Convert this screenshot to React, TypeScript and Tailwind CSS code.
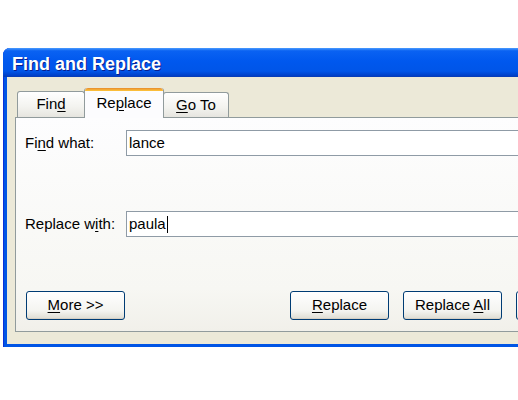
import React from 'react';

const font = "font-['Liberation_Sans',Arial,sans-serif]";

const Tab: React.FC<{ active?: boolean; children: React.ReactNode; className?: string }> = ({
  active,
  children,
  className = '',
}) => {
  if (active) {
    return (
      <div
        className={`relative z-10 -mb-px flex h-[30px] shrink-0 flex-col rounded-t-[3px] border-x border-[#919b9c] bg-[#fcfcfe] ${className}`}
      >
        <div className="h-[3px] rounded-t-[3px] bg-[linear-gradient(to_bottom,#e68b2c,#ffc73c)]" />
        <div className="flex flex-1 items-center justify-center pb-[2px] text-[15px] text-black">{children}</div>
      </div>
    );
  }
  return (
    <div
      className={`flex shrink-0 items-center justify-center rounded-t-[3px] border border-b-0 border-[#919b9c] bg-[linear-gradient(to_bottom,#ffffff,#f3f3ef_60%,#e6e5df)] text-[15px] text-black ${className}`}
    >
      {children}
    </div>
  );
};

const Button: React.FC<{ children?: React.ReactNode; className?: string }> = ({ children, className = '' }) => (
  <div
    className={`flex h-[29px] w-[99px] shrink-0 items-center justify-center rounded-[3px] border border-[#003c74] bg-[linear-gradient(to_bottom,#ffffff,#f4f4f0_70%,#dedcd2)] text-[15px] text-black shadow-[inset_0_-1px_0_#d6d0c5] ${className}`}
  >
    {children}
  </div>
);

export default function App() {
  return (
    <div className={`h-[400px] w-[518px] overflow-hidden bg-white pl-[3px] pt-[48px] ${font}`}>
      {/* Window */}
      <div className="w-[560px] rounded-t-[7px] bg-[#0055e5] pb-[3px] pl-[4px] shadow-[inset_1px_0_0_#0831d9]">
        {/* Title bar */}
        <div className="-ml-[4px] flex h-[29px] items-center rounded-t-[7px] bg-[linear-gradient(to_bottom,#4a9bff_0%,#0a62f2_10%,#0058ee_45%,#0055e8_80%,#0040c8_95%,#0a3bb0_100%)] pl-[9px] pt-[3px]">
          <span className="text-[18px] font-bold text-white [text-shadow:1px_1px_0_#0a1e8c]">Find and Replace</span>
        </div>

        {/* Body */}
        <div className="bg-[#ece9d8] pb-[12px] pl-[8px] pt-[9px]">
          {/* Tabs */}
          <div className="flex h-[31px] items-end pl-[2px]">
            <Tab className="h-[26px] w-[68px]">
              <span>
                Fin<span className="underline underline-offset-2">d</span>
              </span>
            </Tab>
            <Tab active className="-ml-px w-[80px]">
              <span>
                Re<span className="underline underline-offset-2">p</span>lace
              </span>
            </Tab>
            <Tab className="-ml-px h-[25px] w-[66px]">
              <span>
                <span className="underline underline-offset-2">G</span>o To
              </span>
            </Tab>
          </div>

          {/* Panel */}
          <div className="flex flex-col border border-[#919b9c] bg-[linear-gradient(to_bottom,#fdfdfe,#f7f7f3_80%,#f1f0ea)] pb-[11px] pl-[9px] pt-[12px]">
            <div className="flex h-[26px] items-center">
              <span className="w-[101px] shrink-0 text-[15px] text-black">
                Fi<span className="underline underline-offset-2">n</span>d what:
              </span>
              <div className="flex h-[26px] flex-1 items-center border border-[#8f9ba6] bg-white pl-[2px] text-[15px] text-black">
                lance
              </div>
            </div>

            <div className="mt-[55px] flex h-[26px] items-center">
              <span className="w-[101px] shrink-0 text-[15px] text-black">
                Replace w<span className="underline underline-offset-2">i</span>th:
              </span>
              <div className="flex h-[26px] flex-1 items-center border border-[#8f9ba6] bg-white pl-[2px] text-[15px] text-black">
                paula<span className="ml-px inline-block h-[17px] w-px bg-black" />
              </div>
            </div>

            <div className="mt-[54px] flex items-center pl-[1px]">
              <Button>
                <span>
                  <span className="underline underline-offset-2">M</span>ore &gt;&gt;
                </span>
              </Button>
              <Button className="ml-[165px]">
                <span>
                  <span className="underline underline-offset-2">R</span>eplace
                </span>
              </Button>
              <Button className="ml-[14px]">
                <span>
                  Replace <span className="underline underline-offset-2">A</span>ll
                </span>
              </Button>
              <Button className="ml-[14px]" />
            </div>
          </div>
        </div>
      </div>
    </div>
  );
}
